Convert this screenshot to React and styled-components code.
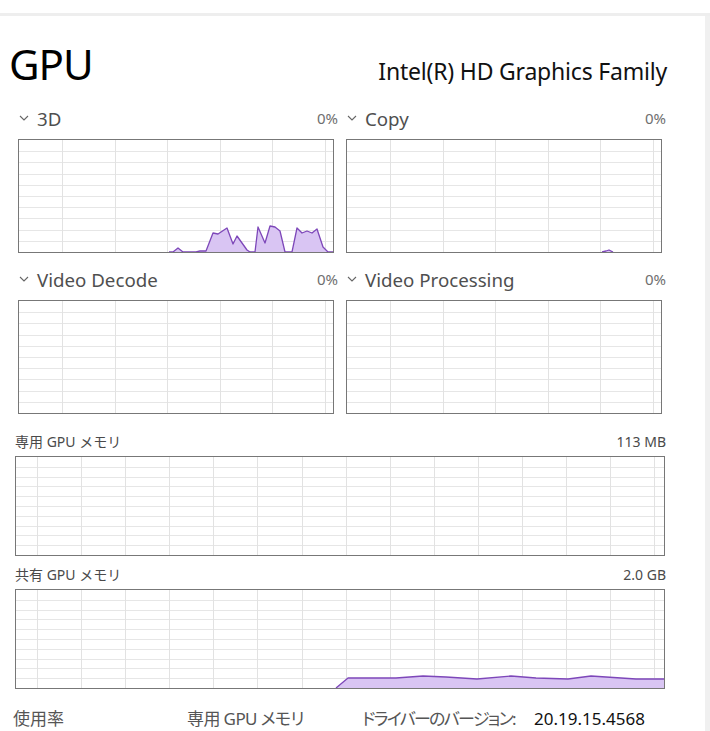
import React from 'react';
import styled, { createGlobalStyle } from 'styled-components';

const GlobalStyle = createGlobalStyle`
    html, body {
        margin: 0;
        padding: 0;
        background: #ffffff;
    }
    body {
        font-family: "Noto Sans", "Noto Sans CJK JP", sans-serif;
        overflow: hidden;
    }
`;

const Page = styled.div`
    padding-top: 13px;
    height: 731px;
    box-sizing: border-box;
    display: flex;
    flex-direction: column;
`;

const Frame = styled.div`
    flex: 1;
    display: flex;
    border-top: 3px solid #eeeeee;
`;

const Panel = styled.div`
    width: 705px;
    background: #ffffff;
`;

const Gutter = styled.div`
    flex: 1;
    background: #f0f0f0;
`;

const Header = styled.div`
    display: flex;
    justify-content: space-between;
    align-items: baseline;
    padding: 18px 38px 0 9px;
    height: 86px;
    box-sizing: border-box;
`;

const Title = styled.h1`
    margin: 0;
    font-size: 42px;
    font-weight: 400;
    line-height: 60px;
    color: #000000;
    letter-spacing: -1px;
`;

const Adapter = styled.div`
    font-size: 23px;
    color: #111111;
    letter-spacing: -0.2px;
`;

const EngineGrid = styled.div`
    display: grid;
    grid-template-columns: 320px 320px;
    column-gap: 8px;
    row-gap: 13px;
    padding: 3px 0 0 18px;
`;

const Engine = styled.div`
    display: flex;
    flex-direction: column;
`;

const EngineHead = styled.div`
    display: flex;
    align-items: center;
    height: 26px;
    margin-bottom: 8px;
`;

const Chevron = styled.svg`
    width: 10px;
    height: 6px;
    margin: 0 8px 0 1px;
    flex: none;
`;

const EngineName = styled.span`
    flex: 1;
    font-size: 18.7px;
    color: #4f4f4f;
`;

const Percent = styled.span`
    font-size: 15px;
    color: #6f6f6f;
`;

const Chart = styled.div`
    width: ${p => p.$w}px;
    height: ${p => p.$h}px;
    border: 1px solid #777777;
    box-sizing: border-box;
    line-height: 0;
    svg {
        display: block;
    }
`;

const Memory = styled.div`
    display: flex;
    flex-direction: column;
    padding-left: 15px;
    width: 651px;
    margin-top: ${p => p.$top}px;
`;

const MemoryHead = styled.div`
    display: flex;
    justify-content: space-between;
    align-items: center;
    height: 20px;
    margin-bottom: 5px;
    font-size: 14px;
    color: #4a4a4a;
`;

const Stats = styled.div`
    display: flex;
    align-items: center;
    margin-top: 20px;
    padding-left: 13px;
    height: 20px;
    line-height: 20px;
    font-size: 17px;
    color: #555555;
    white-space: nowrap;
    font-feature-settings: "palt";
`;

const Stat = styled.span`
    width: ${p => p.$w}px;
    flex: none;
    letter-spacing: ${p => p.$ls || 0}px;
`;

const Value = styled.span`
    color: #111111;
`;

const ChevronIcon = () => (
    <Chevron viewBox="0 0 10 6">
        <path d="M1 1 L5 5 L9 1" fill="none" stroke="#666" strokeWidth="1.1" />
    </Chevron>
);

const GraphBox = ({ w, h, cols, offset, rows, points }) => {
    const iw = w - 2;
    const ih = h - 2;
    const vx = [];
    for (let x = offset; x < iw; x += cols) vx.push(Math.round(x) + 0.5);
    const hy = [];
    for (let i = 1; i < rows; i++) hy.push(Math.round((ih / rows) * i) + 0.5);
    const poly = points && points.map(p => p.join(',')).join(' ');
    const area = points && `${points[0][0]},${ih} ${poly} ${points[points.length - 1][0]},${ih}`;
    return (
        <Chart $w={w} $h={h}>
            <svg width={iw} height={ih}>
                {hy.map(y => <line key={'h' + y} x1="0" x2={iw} y1={y} y2={y} stroke="#e6e6e6" strokeWidth="1" />)}
                {vx.map(x => <line key={'v' + x} x1={x} x2={x} y1="0" y2={ih} stroke="#e2e2e2" strokeWidth="1" />)}
                {points && <polygon points={area} fill="#d9c5f3" />}
                {points && <polyline points={poly} fill="none" stroke="#7d47b9" strokeWidth="1.3" strokeLinejoin="round" />}
            </svg>
        </Chart>
    );
};

const gpu3d = [
    [150, 112], [154, 112], [159, 108], [164, 112], [177, 112], [181, 111], [187, 111], [194, 93], [199, 94],
    [208, 88], [214, 104], [218, 96], [228, 110], [231, 112], [236, 112], [239, 87], [246, 103],
    [251, 86], [256, 87], [261, 91], [266, 112], [273, 112], [278, 88], [283, 93], [288, 91],
    [293, 93], [298, 89], [304, 107], [309, 112], [314, 112],
];

const copy = [[255, 112], [259, 111], [262, 110], [266, 112]];

const shared = [
    [320, 98], [332, 88], [380, 88], [407, 86], [430, 87], [461, 89], [495, 86],
    [520, 88], [552, 89], [575, 86], [620, 89], [648, 89],
];

const engines = [
    { name: '3D', points: gpu3d },
    { name: 'Copy', points: copy },
    { name: 'Video Decode' },
    { name: 'Video Processing' },
];

export default function App() {
    return (
        <>
            <GlobalStyle />
            <Page>
                <Frame>
                    <Panel>
                        <Header>
                            <Title>GPU</Title>
                            <Adapter>Intel(R) HD Graphics Family</Adapter>
                        </Header>
                        <EngineGrid>
                            {engines.map(e => (
                                <Engine key={e.name}>
                                    <EngineHead>
                                        <ChevronIcon />
                                        <EngineName>{e.name}</EngineName>
                                        <Percent>0%</Percent>
                                    </EngineHead>
                                    <GraphBox w={316} h={114} cols={52.6} offset={43} rows={10} points={e.points} />
                                </Engine>
                            ))}
                        </EngineGrid>
                        <Memory $top={17}>
                            <MemoryHead>
                                <span>専用 GPU メモリ</span>
                                <span>113 MB</span>
                            </MemoryHead>
                            <GraphBox w={650} h={100} cols={44.1} offset={21} rows={10} />
                        </Memory>
                        <Memory $top={8}>
                            <MemoryHead>
                                <span>共有 GPU メモリ</span>
                                <span>2.0 GB</span>
                            </MemoryHead>
                            <GraphBox w={650} h={100} cols={44.1} offset={21} rows={10} points={shared} />
                        </Memory>
                        <Stats>
                            <Stat $w={174}>使用率</Stat>
                            <Stat $w={175} $ls={-0.6}>専用 GPU メモリ</Stat>
                            <Stat $w={172} $ls={-1.7}>ドライバーのバージョン:</Stat>
                            <Value>20.19.15.4568</Value>
                        </Stats>
                    </Panel>
                    <Gutter />
                </Frame>
            </Page>
        </>
    );
}
